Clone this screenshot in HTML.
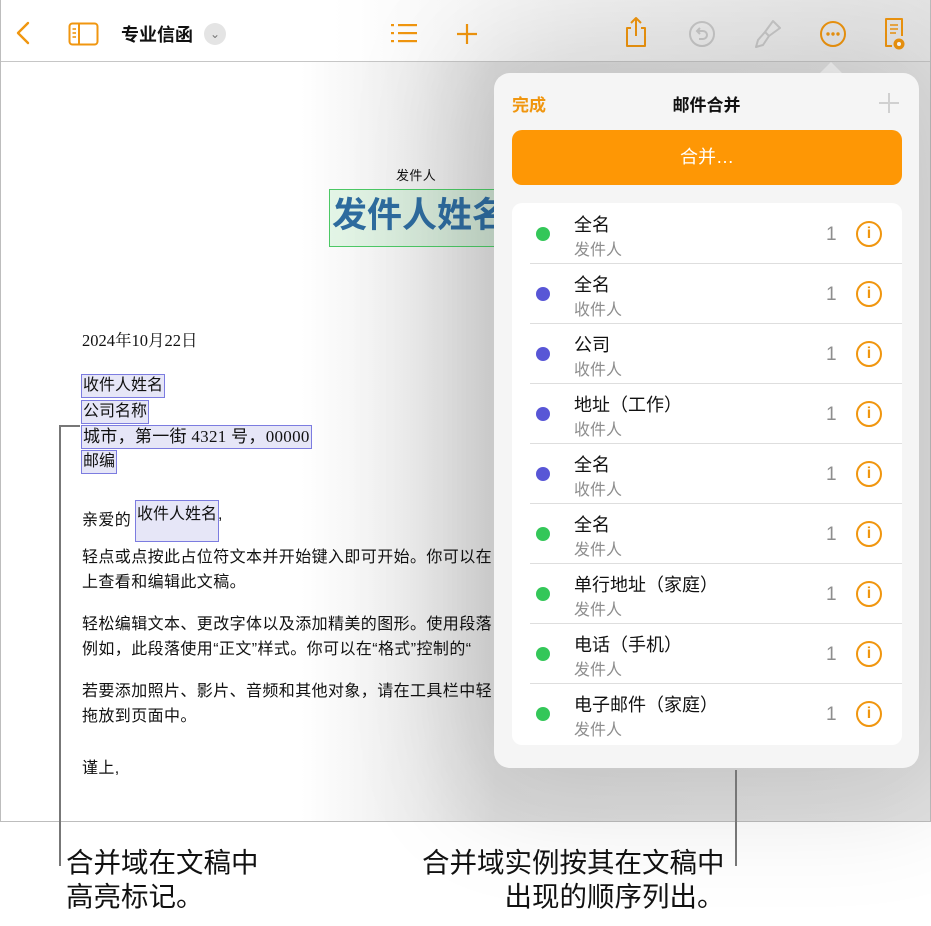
<!DOCTYPE html>
<html><head><meta charset="utf-8"><style>
*{margin:0;padding:0;box-sizing:border-box}
body{width:931px;height:926px;background:#fff;position:relative;overflow:hidden;font-family:"Liberation Sans","Noto Sans CJK SC",sans-serif;color:#111}
.a{position:absolute;white-space:nowrap}
#frame{position:absolute;left:0;top:0;width:931px;height:822px;border:1px solid #bdbdbd;border-top:none;overflow:hidden;background:linear-gradient(90deg,#fff 0,#fff 300px,#ececec 420px,#dcdcdc 495px,#e2e2e2 931px)}
#tb{position:absolute;left:0;top:0;width:931px;height:62px;border-bottom:1px solid #c6c6c6;background:linear-gradient(90deg,#fff 0,#fff 330px,#f1f1f1 600px,#e6e6e6 931px)}
.doc{font-size:16px;color:#111;letter-spacing:.4px}
.ph{position:absolute;background:#e6e6f7;border:1px solid #7c7ce0;height:24px;line-height:22px;padding:0 1px;font-size:16px}
#pop{position:absolute;left:494px;top:73px;width:425px;height:695px;background:#f5f5f5;border-radius:16px;box-shadow:0 0 120px 30px rgba(0,0,0,.13)}
.row{position:absolute;left:0;width:390px;height:60px}
.dot{position:absolute;left:24px;top:23px;width:14px;height:14px;border-radius:50%}
.t1{position:absolute;left:62px;top:7px;font-size:18px;color:#111}
.t2{position:absolute;left:62px;top:32px;font-size:16px;color:#8e8e8e}
.n{position:absolute;left:314px;top:20px;font-size:19px;color:#8e8e8e}
.info{position:absolute;left:344px;top:17px;width:26px;height:26px;border:2px solid #f0960f;border-radius:50%;color:#f0960f;font-size:16px;font-weight:bold;text-align:center;line-height:22px}
.sep{position:absolute;left:18px;right:0;bottom:0;height:1px;background:#dedede}
.cap{font-size:27.5px;color:#111;line-height:34px}
</style></head><body>
<div id="frame">
<div id="tb">
<svg class="a" style="left:12px;top:20px" width="20" height="26" viewBox="0 0 20 26"><path d="M15 3 L5 13 L15 23" stroke="#f0960f" stroke-width="2.4" fill="none" stroke-linecap="round" stroke-linejoin="round"/></svg>
<svg class="a" style="left:67px;top:22px" width="32" height="24" viewBox="0 0 32 24"><rect x="1.5" y="1.5" width="28" height="21" rx="3" stroke="#f0960f" stroke-width="2" fill="none"/><line x1="11" y1="2" x2="11" y2="22" stroke="#f0960f" stroke-width="2"/><line x1="4.5" y1="7" x2="8" y2="7" stroke="#f0960f" stroke-width="1.6"/><line x1="4.5" y1="11" x2="8" y2="11" stroke="#f0960f" stroke-width="1.6"/><line x1="4.5" y1="15" x2="8" y2="15" stroke="#f0960f" stroke-width="1.6"/></svg>
<div class="a" style="left:120px;top:21px;font-size:18px;font-weight:bold">专业信函</div>
<div class="a" style="left:203px;top:23px;width:22px;height:22px;border-radius:50%;background:#e4e4e4;color:#777;font-size:12px;text-align:center;line-height:22px">⌄</div>
<svg class="a" style="left:389px;top:22px" width="28" height="22" viewBox="0 0 28 22"><g fill="#f0960f"><rect x="1" y="2" width="3" height="2.2"/><rect x="1" y="10" width="3" height="2.2"/><rect x="1" y="18" width="3" height="2.2"/><rect x="8" y="2" width="19" height="2.2"/><rect x="8" y="10" width="19" height="2.2"/><rect x="8" y="18" width="19" height="2.2"/></g></svg>
<svg class="a" style="left:454px;top:22px" width="24" height="24" viewBox="0 0 24 24"><path d="M12 2V22M2 12H22" stroke="#f0960f" stroke-width="2.2"/></svg>
<svg class="a" style="left:622px;top:16px" width="26" height="32" viewBox="0 0 26 32"><path d="M8 12H4V30H22V12H18M13 20V2M8 7L13 2L18 7" stroke="#f0960f" stroke-width="2" fill="none" stroke-linejoin="round"/></svg>
<svg class="a" style="left:687px;top:20px" width="28" height="28" viewBox="0 0 28 28"><circle cx="14" cy="14" r="12" stroke="#c8c8c8" stroke-width="2" fill="none"/><path d="M12 8L9 11L12 14M9 11H15A4 4 0 0 1 15 19H11" stroke="#c8c8c8" stroke-width="2" fill="none"/></svg>
<svg class="a" style="left:752px;top:18px" width="30" height="32" viewBox="0 0 30 32"><path d="M20 3L27 10L16 18L12 14ZM12 14L5 22L3 29L10 27L16 18" stroke="#c8c8c8" stroke-width="2" fill="none" stroke-linejoin="round"/></svg>
<svg class="a" style="left:818px;top:20px" width="28" height="28" viewBox="0 0 28 28"><circle cx="14" cy="14" r="12" stroke="#f0960f" stroke-width="2" fill="none"/><circle cx="9" cy="14" r="1.7" fill="#f0960f"/><circle cx="14" cy="14" r="1.7" fill="#f0960f"/><circle cx="19" cy="14" r="1.7" fill="#f0960f"/></svg>
<svg class="a" style="left:881px;top:17px" width="28" height="34" viewBox="0 0 28 34"><path d="M10 29H4V2H20V19" stroke="#f0960f" stroke-width="2" fill="none" stroke-linejoin="round"/><path d="M8 8H16M8 12H16M8 16H14" stroke="#f0960f" stroke-width="1.6"/><circle cx="17" cy="27" r="5.5" fill="#f0960f"/><circle cx="17" cy="27" r="2" fill="#fff"/></svg>
</div>
<div class="a doc" style="left:395px;top:165px;font-size:13px">发件人</div>
<div class="a" style="left:328px;top:189px;width:180px;height:58px;background:linear-gradient(90deg,#e3f5e6,#c8dccc);border:1px solid #4cc865;font-size:35px;font-weight:bold;color:#2e6b9e;line-height:52px;padding-left:2px">发件人姓名</div>
<div class="a doc" style="left:81px;top:327px;font-family:'Liberation Serif','Noto Serif CJK SC',serif;font-size:16.5px;letter-spacing:0">2024年10月22日</div>
<div class="ph" style="left:80px;top:374px">收件人姓名</div>
<div class="ph" style="left:80px;top:400px">公司名称</div>
<div class="ph" style="left:80px;top:425px;font-family:'Liberation Serif','Noto Sans CJK SC',serif;font-size:17px;letter-spacing:.3px">城市，第一街 4321 号，00000</div>
<div class="ph" style="left:80px;top:450px">邮编</div>
<div class="a doc" style="left:81px;top:506px">亲爱的</div>
<div class="ph" style="left:134px;top:500px;height:42px;line-height:28px">收件人姓名</div>
<div class="a doc" style="left:217px;top:506px">,</div>
<div class="a doc" style="left:81px;top:545px;line-height:25px">轻点或点按此占位符文本并开始键入即可开始。你可以在<br>上查看和编辑此文稿。</div>
<div class="a doc" style="left:81px;top:612px;line-height:25px">轻松编辑文本、更改字体以及添加精美的图形。使用段落<br>例如，此段落使用“正文”样式。你可以在“格式”控制的“</div>
<div class="a doc" style="left:81px;top:679px;line-height:25px">若要添加照片、影片、音频和其他对象，请在工具栏中轻<br>拖放到页面中。</div>
<div class="a doc" style="left:81px;top:754px">谨上,</div>
</div>
<div class="a" style="left:819px;top:62px;width:0;height:0;border-left:12px solid transparent;border-right:12px solid transparent;border-bottom:12px solid #f5f5f5"></div>
<div id="pop">
<div class="a" style="left:18px;top:18px;font-size:17px;color:#f0960f;font-weight:bold">完成</div>
<div class="a" style="left:0;width:425px;text-align:center;top:18px;font-size:17px;font-weight:bold">邮件合并</div>
<svg class="a" style="left:384px;top:19px" width="22" height="22" viewBox="0 0 22 22"><path d="M11 1V21M1 11H21" stroke="#d0d0d0" stroke-width="2"/></svg>
<div class="a" style="left:18px;top:57px;width:390px;height:55px;background:#fe9705;border-radius:10px;color:#fff;font-size:18px;text-align:center;line-height:55px">合并…</div>
<div class="a" style="left:18px;top:130px;width:390px;height:542px;background:#fff;border-radius:10px;overflow:hidden">
<div class="row" style="top:1px"><div class="dot" style="background:#34c759"></div><div class="t1">全名</div><div class="t2">发件人</div><div class="n">1</div><div class="info">i</div><div class="sep"></div></div>
<div class="row" style="top:61px"><div class="dot" style="background:#5856d6"></div><div class="t1">全名</div><div class="t2">收件人</div><div class="n">1</div><div class="info">i</div><div class="sep"></div></div>
<div class="row" style="top:121px"><div class="dot" style="background:#5856d6"></div><div class="t1">公司</div><div class="t2">收件人</div><div class="n">1</div><div class="info">i</div><div class="sep"></div></div>
<div class="row" style="top:181px"><div class="dot" style="background:#5856d6"></div><div class="t1">地址（工作）</div><div class="t2">收件人</div><div class="n">1</div><div class="info">i</div><div class="sep"></div></div>
<div class="row" style="top:241px"><div class="dot" style="background:#5856d6"></div><div class="t1">全名</div><div class="t2">收件人</div><div class="n">1</div><div class="info">i</div><div class="sep"></div></div>
<div class="row" style="top:301px"><div class="dot" style="background:#34c759"></div><div class="t1">全名</div><div class="t2">发件人</div><div class="n">1</div><div class="info">i</div><div class="sep"></div></div>
<div class="row" style="top:361px"><div class="dot" style="background:#34c759"></div><div class="t1">单行地址（家庭）</div><div class="t2">发件人</div><div class="n">1</div><div class="info">i</div><div class="sep"></div></div>
<div class="row" style="top:421px"><div class="dot" style="background:#34c759"></div><div class="t1">电话（手机）</div><div class="t2">发件人</div><div class="n">1</div><div class="info">i</div><div class="sep"></div></div>
<div class="row" style="top:481px"><div class="dot" style="background:#34c759"></div><div class="t1">电子邮件（家庭）</div><div class="t2">发件人</div><div class="n">1</div><div class="info">i</div></div>
</div>
</div>
<div class="a" style="left:59px;top:425px;width:2px;height:441px;background:#777"></div>
<div class="a" style="left:59px;top:425px;width:21px;height:2px;background:#777"></div>
<div class="a" style="left:735px;top:770px;width:2px;height:96px;background:#777"></div>
<div class="a cap" style="left:66px;top:846px">合并域在文稿中<br>高亮标记。</div>
<div class="a cap" style="left:422px;top:846px;text-align:right">合并域实例按其在文稿中<br>出现的顺序列出。</div>
</body></html>
